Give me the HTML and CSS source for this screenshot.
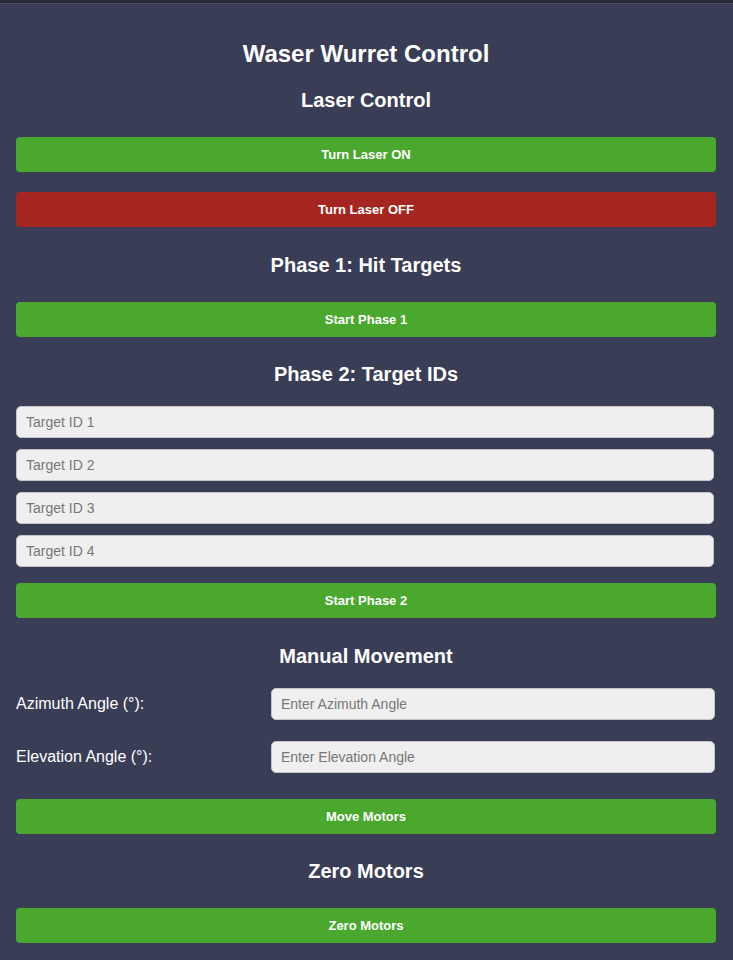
FILE: index.html
```html
<!DOCTYPE html>
<html>
<head>
<meta charset="utf-8">
<link rel="stylesheet" href="styles.css">
</head>
<body>
<div class="topbar"></div>
<main class="panel">
  <h1 class="title">Waser Wurret Control</h1>

  <h2 class="section-title first">Laser Control</h2>
  <button class="btn btn-green">Turn Laser ON</button>
  <button class="btn btn-red gap-20">Turn Laser OFF</button>

  <h2 class="section-title">Phase 1: Hit Targets</h2>
  <button class="btn btn-green">Start Phase 1</button>

  <h2 class="section-title to-input">Phase 2: Target IDs</h2>
  <div class="target-list">
    <input class="field" type="text" placeholder="Target ID 1">
    <input class="field" type="text" placeholder="Target ID 2">
    <input class="field" type="text" placeholder="Target ID 3">
    <input class="field" type="text" placeholder="Target ID 4">
  </div>
  <button class="btn btn-green gap-16">Start Phase 2</button>

  <h2 class="section-title to-input">Manual Movement</h2>
  <div class="angle-grid">
    <label class="angle-label">Azimuth Angle (°):</label>
    <input class="field" type="text" placeholder="Enter Azimuth Angle">
    <label class="angle-label">Elevation Angle (°):</label>
    <input class="field" type="text" placeholder="Enter Elevation Angle">
  </div>
  <button class="btn btn-green gap-26">Move Motors</button>

  <h2 class="section-title">Zero Motors</h2>
  <button class="btn btn-green">Zero Motors</button>
</main>
</body>
</html>
```

FILE: styles.css
```css
html, body {
  margin: 0;
  padding: 0;
  background: #393d56;
}
body {
  font-family: "Liberation Sans", Arial, sans-serif;
  color: #ffffff;
}
.topbar {
  height: 3px;
  background: #262838;
  border-bottom: 1px solid #4b5068;
}
.panel {
  width: 700px;
  margin: 0 0 0 16px;
  padding: 36px 0 20px;
  display: flex;
  flex-direction: column;
}
.title {
  margin: 0;
  font-size: 24px;
  line-height: 28px;
  font-weight: bold;
  text-align: center;
}
.section-title {
  margin: 26.5px 0 25px;
  font-size: 20px;
  line-height: 23px;
  font-weight: bold;
  text-align: center;
}
.section-title.first {
  margin-top: 21px;
}
.section-title.to-input {
  margin-bottom: 20px;
}
.btn {
  display: block;
  width: 100%;
  height: 35px;
  border: none;
  border-radius: 4px;
  color: #ffffff;
  font-family: "Liberation Sans", Arial, sans-serif;
  font-size: 13px;
  font-weight: bold;
  cursor: pointer;
}
.btn-green {
  background: #4aa82f;
}
.btn-red {
  background: #a52620;
}
.gap-20 { margin-top: 20px; }
.gap-16 { margin-top: 16px; }
.gap-26 { margin-top: 26px; }
.target-list {
  display: flex;
  flex-direction: column;
  gap: 11px;
}
.field {
  box-sizing: border-box;
  width: 698px;
  height: 32px;
  padding: 0 9px;
  background: #efefef;
  border: 1px solid #c4c4c8;
  border-radius: 5px;
  font-family: "Liberation Sans", Arial, sans-serif;
  font-size: 14px;
  color: #333;
}
.field::placeholder {
  color: #777777;
}
.angle-grid {
  display: grid;
  grid-template-columns: 255px 1fr;
  row-gap: 21px;
  align-items: center;
}
.angle-grid .field {
  width: 444px;
}
.angle-label {
  font-size: 16px;
  color: #ffffff;
}
```
